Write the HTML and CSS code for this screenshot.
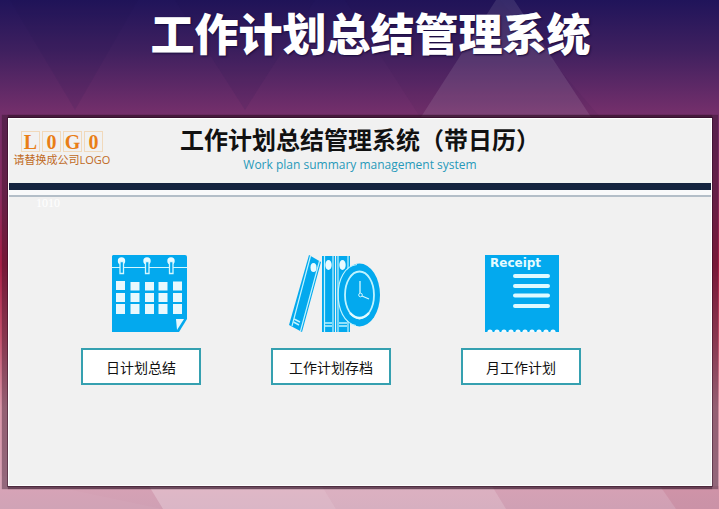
FILE: index.html
```html
<!DOCTYPE html>
<html lang="zh-CN">
<head>
<meta charset="utf-8">
<meta name="viewport" content="width=device-width, initial-scale=1">
<title>工作计划总结管理系统</title>
<link rel="stylesheet" href="styles.css">
</head>
<body>
<svg class="backdrop" viewBox="0 0 719 509" preserveAspectRatio="none" aria-hidden="true">
  <g fill="#20104a" fill-opacity=".1">
    <path d="M10 0H138L75 110Z"/>
    <path d="M175 0H315L245 110Z"/>
  </g>
  <path d="M345 0L420 117H600L500 0Z" fill="#20104a" fill-opacity=".06"/>
  <path d="M496 0H514L591 117H421Z" fill="#fff" fill-opacity=".1"/>
  <path d="M0 475L163 509H0Z" fill="#fff" fill-opacity=".03"/>
  <path d="M149 486H322L336 509H163Z" fill="#fff" fill-opacity=".24"/>
  <path d="M322 486H492L506 509H336Z" fill="#fff" fill-opacity=".16"/>
  <path d="M660 486H719V509H676Z" fill="#b04060" fill-opacity=".15"/>
</svg>

<header class="banner">
  <h1>工作计划总结管理系统</h1>
</header>

<main class="panel">
  <div class="masthead">
    <div class="brand">
      <div class="letters"><span>L</span><span>0</span><span>G</span><span>0</span></div>
      <p>请替换成公司LOGO</p>
    </div>
    <div class="heading">
      <h2>工作计划总结管理系统（带日历）</h2>
      <p>Work plan summary management system</p>
    </div>
  </div>
  <div class="bar"></div>
  <div class="rule"></div>
  <p class="code">1010</p>

  <nav class="modules">
    <div class="module">
      <svg viewBox="0 0 120 78" aria-hidden="true">
        <path d="M32 0H104Q106 0 106 2V64L98 77H31V1Z" fill="#03a9ee"/>
        <path d="M31 12.5H106" stroke="#d5f7ff" stroke-width="1.2"/>
        <g fill="#ecfbff">
          <circle cx="40.500" cy="6" r="3.700"/><circle cx="66" cy="6" r="3.700"/><circle cx="90" cy="6" r="3.700"/>
        </g>
        <g fill="#03a9ee" stroke="#d5f7ff" stroke-width="1.300">
          <path d="M39 6.500H42.500V18.500H39ZM64.500 6.500H68V18.500H64.500ZM88.500 6.500H92V18.500H88.500Z"/>
        </g>
        <g fill="#e9f8fd">
          <path d="M35 26h9v9h-9zM49.500 27h9v8.500h-9zM64 27h9v8.500h-9zM77.500 27h9v8.500h-9zM92 26.500h9v9h-9z"/>
          <path d="M35 38h9v9h-9zM49.500 38h9v9h-9zM64 38h9v9h-9zM77.500 38h9v9h-9zM92 38h9v9h-9z"/>
          <path d="M35 49h9v10h-9zM49.500 49h9v10h-9zM64 49h9v10h-9zM77.500 49h9v10h-9zM92 49h9v10h-9z"/>
          <path d="M95 64H103L96 75Z"/>
        </g>
      </svg>
      <button type="button">日计划总结</button>
    </div>
    <div class="module">
      <svg viewBox="0 0 120 78" aria-hidden="true">
        <g fill="#03a9ee">
          <path d="M38 0L50 7L31 77L18 70Z"/>
          <path d="M51 1H64V77H51ZM65 1H79V77H65Z"/>
        </g>
        <g fill="none" stroke="#bff3ff" stroke-width="1.200">
          <path d="M39.500 1L21 71M48.500 6L29.500 76M53.500 1V77M62 1V77M67 1V77M77 1V77"/>
          <path d="M23 64L29 67M22.500 67L28 70M54 68H61M54 71H61M68 68H76M68 71H76" stroke-width="1.500"/>
        </g>
        <path d="M64.600 1V77" stroke="#f1f1f1" stroke-width="1"/>
        <g fill="#e9faff">
          <ellipse cx="42.500" cy="12.500" rx="3" ry="4.500"/>
          <ellipse cx="57.500" cy="10" rx="3.200" ry="5"/>
          <ellipse cx="71.500" cy="10" rx="3.200" ry="5"/>
        </g>
        <ellipse cx="88.500" cy="40" rx="20.500" ry="31.500" fill="#03a9ee"/>
        <path d="M86 9.500C61 12 61 66 85 70.500" fill="none" stroke="#bff3ff" stroke-width="1.200"/>
        <ellipse cx="88.500" cy="40" rx="14.500" ry="23.500" fill="none" stroke="#bff3ff" stroke-width="1.800"/>
        <path d="M79 58Q88.500 68 98 58" fill="none" stroke="#e2faff" stroke-width="2.500"/>
        <path d="M89 26V38M91 41L98 44" fill="none" stroke="#d5f7ff" stroke-width="1.300"/>
        <circle cx="89.500" cy="40" r="1.800" fill="none" stroke="#d5f7ff"/>
      </svg>
      <button type="button">工作计划存档</button>
    </div>
    <div class="module">
      <svg viewBox="0 0 120 78" aria-hidden="true">
        <path d="M24 0H98V77H24Z" fill="#03a9ee"/>
        <g fill="#f1fbff">
          <circle cx="29" cy="77" r="2.600"/><circle cx="36" cy="77" r="2.600"/><circle cx="43" cy="77" r="2.600"/>
          <circle cx="50" cy="77" r="2.600"/><circle cx="57" cy="77" r="2.600"/><circle cx="64" cy="77" r="2.600"/>
          <circle cx="71" cy="77" r="2.600"/><circle cx="78" cy="77" r="2.600"/><circle cx="85" cy="77" r="2.600"/>
          <circle cx="92" cy="77" r="2.600"/>
        </g>
        <path d="M24 77H98V80H24Z" fill="#f1f1f1"/>
        <text class="receipt" x="29" y="12">Receipt</text>
        <path d="M54 21H87M54 31H87M54 40.500H87M54 51H87" stroke="#dffaff" stroke-width="4" stroke-linecap="round"/>
      </svg>
      <button type="button">月工作计划</button>
    </div>
  </nav>
</main>
</body>
</html>
```
FILE: styles.css
```css
* {
  box-sizing: border-box;
  margin: 0;
}

body {
  position: relative;
  display: flex;
  flex-direction: column;
  min-height: 100vh;
  padding-bottom: 23px;
  background: linear-gradient(#20145a 0%, #3f205f 10%, #732f6b 22%, #8a2c60 38%, #a81f46 52%, #c4506c 66%, #d995a8 80%, #d9a2b5 94%, #cfa0b4 100%);
  font-family: "Open Sans", "Noto Sans CJK SC", sans-serif;
  color: #111;
}

.backdrop {
  position: absolute;
  inset: 0;
  z-index: -1;
  width: 100%;
  height: 100%;
}

.banner {
  height: 118px;
  padding-left: 22px;
  text-align: center;
}

.banner h1 {
  font: 900 44px/64px "Noto Sans CJK SC", sans-serif;
  color: #fff;
  text-shadow: 1px 1px 2px #160a3d;
}

.panel {
  flex: 1;
  margin: 0 7px 0 8px;
  border: 1px solid #fff;
  background: #f1f1f1;
  box-shadow: 0 0 0 1px rgba(35, 5, 25, .4), -3px 0 1px 3px rgba(45, 15, 35, .4), 3px 0 1px 3px rgba(45, 15, 35, .4);
}

.masthead {
  display: grid;
  grid-template-columns: 106px 1fr 106px;
  height: 64px;
}

.brand {
  display: flex;
  flex-direction: column;
  align-items: center;
  padding-top: 12px;
}

.letters {
  display: flex;
  gap: 2px;
}

.letters span {
  width: 19px;
  height: 21px;
  border: 1px solid #f1d9bb;
  font: bold 20px/20px "Liberation Serif", serif;
  text-align: center;
  color: #e97e16;
}

.brand p {
  font-size: 11px;
  line-height: 16px;
  white-space: nowrap;
  color: #c06a25;
}

.heading {
  padding-top: 3px;
  text-align: center;
  white-space: nowrap;
}

.heading h2 {
  font: bold 24px/34px "Noto Sans CJK SC", sans-serif;
}

.heading p {
  font-size: 12px;
  line-height: 18px;
  color: #2799b9;
}

.bar {
  height: 7px;
  background: #14233f;
}

.rule {
  height: 7px;
  border-bottom: 2px solid #b3bec8;
  background: #f8f9fa;
}

.code {
  padding-left: 27px;
  font: 12px/12px "Liberation Serif", serif;
  color: #fff;
}

.modules {
  display: flex;
  gap: 70px;
  padding: 46px 72px 0;
}

.module {
  display: flex;
  flex-direction: column;
  gap: 15px;
  width: 120px;
}

.module svg {
  display: block;
  width: 120px;
  height: 78px;
}

.receipt {
  font: bold 12px "DejaVu Sans", sans-serif;
  fill: #e5fbff;
}

.module button {
  height: 37px;
  padding: 0;
  border: 2px solid #35a0b0;
  background: #fff;
  font: 14px/20px "Noto Sans CJK SC", sans-serif;
  color: #111;
}
```
